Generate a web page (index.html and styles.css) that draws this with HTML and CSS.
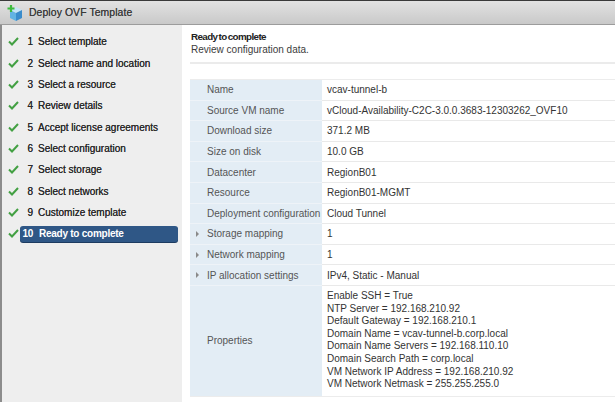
FILE: index.html
```html
<!DOCTYPE html>
<html lang="en">
<head>
  <meta charset="UTF-8" />
  <title>Deploy OVF Template</title>
  <link rel="stylesheet" href="styles.css">
</head>
<body>
  <div class="dialog">
    <div class="titlebar">
      <svg class="app-icon" width="16" height="18" viewBox="0 0 16 18">
        <polygon points="9,3 15,6 9,9 3,6" fill="#c4e5f7"/>
        <polygon points="3,6 9,9 9,17 3,14" fill="#62b3e3"/>
        <polygon points="9,9 15,6 15,14 9,17" fill="#3a8ccc"/>
        <path d="M4 1 V8 M0.5 4.5 H7.5" stroke="#3dbb3d" stroke-width="2.2"/>
      </svg>
      <span class="title">Deploy OVF Template</span>
    </div>

    <div class="main">
      <div class="steps">
        <div class="step"><span class="check"></span><div class="step-label"><span class="num">1</span><span>Select template</span></div></div>
        <div class="step"><span class="check"></span><div class="step-label"><span class="num">2</span><span>Select name and location</span></div></div>
        <div class="step"><span class="check"></span><div class="step-label"><span class="num">3</span><span>Select a resource</span></div></div>
        <div class="step"><span class="check"></span><div class="step-label"><span class="num">4</span><span>Review details</span></div></div>
        <div class="step"><span class="check"></span><div class="step-label"><span class="num">5</span><span>Accept license agreements</span></div></div>
        <div class="step"><span class="check"></span><div class="step-label"><span class="num">6</span><span>Select configuration</span></div></div>
        <div class="step"><span class="check"></span><div class="step-label"><span class="num">7</span><span>Select storage</span></div></div>
        <div class="step"><span class="check"></span><div class="step-label"><span class="num">8</span><span>Select networks</span></div></div>
        <div class="step"><span class="check"></span><div class="step-label"><span class="num">9</span><span>Customize template</span></div></div>
        <div class="step active"><span class="check"></span><div class="step-label"><span class="num">10</span><span>Ready to complete</span></div></div>
      </div>

      <div class="content">
        <div class="page-head">
          <div class="page-title">Ready to complete</div>
          <div class="page-sub">Review configuration data.</div>
        </div>

        <div class="summary">
          <div class="row"><div class="label">Name</div><div class="value">vcav-tunnel-b</div></div>
          <div class="row"><div class="label">Source VM name</div><div class="value">vCloud-Availability-C2C-3.0.0.3683-12303262_OVF10</div></div>
          <div class="row"><div class="label">Download size</div><div class="value">371.2 MB</div></div>
          <div class="row"><div class="label">Size on disk</div><div class="value">10.0 GB</div></div>
          <div class="row"><div class="label">Datacenter</div><div class="value">RegionB01</div></div>
          <div class="row"><div class="label">Resource</div><div class="value">RegionB01-MGMT</div></div>
          <div class="row"><div class="label">Deployment configuration</div><div class="value">Cloud Tunnel</div></div>
          <div class="row"><div class="label expand">Storage mapping</div><div class="value">1</div></div>
          <div class="row"><div class="label expand">Network mapping</div><div class="value">1</div></div>
          <div class="row"><div class="label expand">IP allocation settings</div><div class="value">IPv4, Static - Manual</div></div>
          <div class="row props"><div class="label">Properties</div>
            <div class="value">
              Enable SSH = True<br>
              NTP Server = 192.168.210.92<br>
              Default Gateway = 192.168.210.1<br>
              Domain Name = vcav-tunnel-b.corp.local<br>
              Domain Name Servers = 192.168.110.10<br>
              Domain Search Path = corp.local<br>
              VM Network IP Address = 192.168.210.92<br>
              VM Network Netmask = 255.255.255.0
            </div>
          </div>
        </div>
      </div>
    </div>
  </div>
</body>
</html>
```

FILE: styles.css
```css
* { margin: 0; padding: 0; box-sizing: border-box; }

body {
  font-family: "Liberation Sans", Arial, sans-serif;
  font-size: 10px;
  color: #333;
  background: #fff;
  width: 615px;
  height: 402px;
  overflow: hidden;
}

.dialog {
  display: flex;
  flex-direction: column;
  height: 402px;
}

.titlebar {
  height: 25px;
  display: flex;
  align-items: center;
  gap: 6px;
  padding-left: 7px;
  border-top: 1px solid #3a3a3a;
  border-bottom: 1px solid #9c9c9c;
  background: linear-gradient(#e2e2e2, #c9c9c9);
}

.app-icon { margin-top: 1px; }

.title {
  font-size: 10.4px;
  color: #3a3a3a;
  letter-spacing: 0.1px;
  text-shadow: 0 0 0.4px #555;
}

.main {
  flex: 1;
  display: flex;
  min-height: 0;
}

/* left wizard steps */
.steps {
  width: 182px;
  background: #eeeeee;
  border-left: 2px solid #8c8c8c;
  padding-top: 6.3px;
}

.step {
  height: 21.3px;
  display: flex;
  align-items: center;
  padding-left: 6px;
}

.check {
  width: 11px;
  height: 9px;
  margin-right: 1px;
  background: no-repeat center / contain url("data:image/svg+xml,%3Csvg xmlns='http://www.w3.org/2000/svg' viewBox='0 0 11 9'%3E%3Cpath d='M1 4.5 L4 7.5 L10 1' fill='none' stroke='%2343a043' stroke-width='2'/%3E%3C/svg%3E");
}

.step-label {
  width: 158px;
  height: 16px;
  display: flex;
  align-items: center;
  border-radius: 3px;
  color: #2a2a2a;
  text-shadow: 0 0 0.3px #333;
}

.num {
  width: 13px;
  text-align: right;
  margin-right: 5px;
}

.step.active .step-label {
  background: #2f5786;
  color: #fff;
  font-weight: bold;
  letter-spacing: -0.25px;
  text-shadow: none;
  box-shadow: 0 1px 0 #1d3b60;
}

.step.active .num { margin-right: 6px; }

/* right content */
.content {
  flex: 1;
  padding-left: 8px;
  overflow: hidden;
}

.page-head {
  padding: 5px 0 6px 1px;
  border-bottom: 2px solid #ebebeb;
  line-height: 13px;
}

.page-title {
  font-weight: bold;
  font-size: 9.8px;
  letter-spacing: -0.6px;
  word-spacing: -1px;
  color: #222;
}

.page-sub { color: #3c3c3c; }

.summary {
  margin-top: 15px;
  border-top: 1px solid #ececec;
  border-bottom: 1px solid #ececec;
  width: 100%;
}

.row {
  display: grid;
  grid-template-columns: 132px 1fr;
  height: 20.6px;
}

.label {
  background: #e3edf5;
  color: #555;
  padding-left: 17px;
  display: flex;
  align-items: center;
  border-bottom: 1px solid #eef3f8;
  white-space: nowrap;
  position: relative;
}

.label.expand::before {
  content: "";
  position: absolute;
  left: 6px;
  top: 7px;
  border-left: 3.5px solid #8a8a8a;
  border-top: 3px solid transparent;
  border-bottom: 3px solid transparent;
}

.value {
  padding-left: 5px;
  display: flex;
  align-items: center;
  color: #333;
  border-bottom: 1px solid #e9e9e9;
  white-space: nowrap;
}

.row.props { height: 110px; }

.row.props .value {
  display: block;
  padding-top: 4px;
  line-height: 12.6px;
  border-bottom: none;
}

.row.props .label { border-bottom: none; }
```
